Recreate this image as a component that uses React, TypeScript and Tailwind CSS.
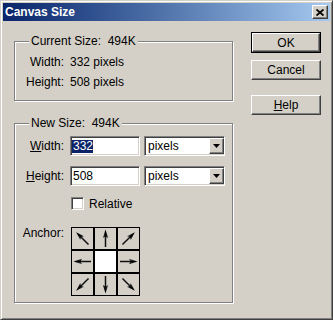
import React from "react";

const raised =
  "border border-t-white border-l-white border-b-[#404040] border-r-[#404040] shadow-[inset_-1px_-1px_0_#808080,inset_1px_1px_0_#d4d0c8]";
const sunken =
  "border border-t-[#808080] border-l-[#808080] border-b-white border-r-white shadow-[inset_1px_1px_0_#404040,inset_-1px_-1px_0_#d4d0c8]";
const etched =
  "border border-[#808080] shadow-[inset_1px_1px_0_#fff,1px_1px_0_#fff]";

function Arrow({ angle }: { angle: number }) {
  return (
    <svg width="21" height="21" viewBox="0 0 21 21">
      <defs>
        <linearGradient id={`g${angle}`} x1="0" y1="0" x2="1" y2="0">
          <stop offset="0" stopColor="#555" />
          <stop offset="0.5" stopColor="#000" />
          <stop offset="1" stopColor="#333" />
        </linearGradient>
      </defs>
      <g transform={`rotate(${angle} 10.5 10.5)`}>
        <line x1="10.5" y1="8" x2="10.5" y2="19" stroke="#111" strokeWidth="1.5" />
        <polygon points="10.5,1.5 13.2,10 10.5,8.5 7.8,10" fill={`url(#g${angle})`} />
      </g>
    </svg>
  );
}

function DownTri() {
  return (
    <svg width="7" height="4" viewBox="0 0 7 4">
      <polygon points="0,0 7,0 3.5,4" fill="#000" />
    </svg>
  );
}

function Select() {
  return (
    <div className={`${sunken} bg-white w-[81px] h-[20px] flex items-center p-[1px]`}>
      <span className="flex-1 pl-[2px] leading-[14px]">pixels</span>
      <div className={`${raised} bg-[#d4d0c8] w-[15px] h-[16px] flex items-center justify-center -mr-[1px]`}>
        <DownTri />
      </div>
    </div>
  );
}

export default function App() {
  return (
    <div
      className="w-[333px] h-[320px] bg-[#d4d0c8] border border-t-[#d4d0c8] border-l-[#d4d0c8] border-b-[#404040] border-r-[#404040] shadow-[inset_1px_1px_0_#fff,inset_-1px_-1px_0_#808080] p-[2px] text-[12px] text-black flex flex-col"
      style={{ fontFamily: '"Liberation Sans", Arial, sans-serif' }}
    >
      {/* Title bar */}
      <div className="h-[18px] bg-linear-to-r from-[#0a246a] to-[#a6caf0] flex items-center justify-between pl-[2px] pr-[2px]">
        <span className="text-white font-bold text-[12px] leading-[14px]">Canvas Size</span>
        <div className={`${raised} bg-[#d4d0c8] w-[16px] h-[14px] flex items-center justify-center`}>
          <svg width="8" height="7" viewBox="0 0 8 7">
            <path d="M0.5 0.5 L7.5 6.5 M7.5 0.5 L0.5 6.5" stroke="#000" strokeWidth="1.8" />
          </svg>
        </div>
      </div>

      <div className="flex pl-[11px]">
        {/* Left column */}
        <div className="w-[220px] flex flex-col">
          {/* Current size group */}
          <div className={`${etched} relative mt-[20px] w-[219px] h-[60px] pt-[10px]`}>
            <span className="absolute left-[14px] -top-[8px] px-[2px] bg-[#d4d0c8] leading-[14px] whitespace-pre">
              Current Size:  494K
            </span>
            <div className="grid grid-cols-[49px_auto] gap-x-[6px] auto-rows-[20px] items-center leading-[14px]">
              <span className="text-right">Width:</span>
              <span>332 pixels</span>
              <span className="text-right">Height:</span>
              <span>508 pixels</span>
            </div>
          </div>

          {/* New size group */}
          <div className={`${etched} relative mt-[22px] w-[219px] h-[180px] pt-[12px]`}>
            <span className="absolute left-[14px] -top-[8px] px-[2px] bg-[#d4d0c8] leading-[14px] whitespace-pre">
              New Size:  494K
            </span>
            <div className="grid grid-cols-[49px_auto] gap-x-[6px] gap-y-[10px] leading-[14px]">
              <span className="text-right self-center">
                <u>W</u>idth:
              </span>
              <div className="flex gap-[4px]">
                <div className={`${sunken} bg-white w-[70px] h-[20px] flex items-center p-[1px]`}>
                  <span className="bg-[#0a246a] text-white leading-[13px] pl-[1px]">332</span>
                </div>
                <Select />
              </div>
              <span className="text-right self-center">
                <u>H</u>eight:
              </span>
              <div className="flex gap-[4px]">
                <div className={`${sunken} bg-white w-[70px] h-[20px] flex items-center p-[1px]`}>
                  <span className="leading-[13px] pl-[1px]">508</span>
                </div>
                <Select />
              </div>
            </div>
            <div className="grid grid-cols-[49px_auto] gap-x-[6px] mt-[11px] leading-[14px]">
              <span />
              <div className="flex items-center gap-[5px] ml-[1px] h-[13px]">
                <div className={`${sunken} bg-white w-[13px] h-[13px]`} />
                <span>Relative</span>
              </div>
            </div>
            <div className="grid grid-cols-[49px_auto] gap-x-[6px] mt-[17px] leading-[14px]">
              <span className="text-right -mt-[1px]">Anchor:</span>
              <div className="ml-[1px] w-[69px] h-[69px] bg-black p-[1px] grid grid-cols-3 gap-[2px]">
                <div className="bg-[#d4d0c8]"><Arrow angle={-45} /></div>
                <div className="bg-[#d4d0c8]"><Arrow angle={0} /></div>
                <div className="bg-[#d4d0c8]"><Arrow angle={45} /></div>
                <div className="bg-[#d4d0c8]"><Arrow angle={-90} /></div>
                <div className="bg-white" />
                <div className="bg-[#d4d0c8]"><Arrow angle={90} /></div>
                <div className="bg-[#d4d0c8]"><Arrow angle={-135} /></div>
                <div className="bg-[#d4d0c8]"><Arrow angle={180} /></div>
                <div className="bg-[#d4d0c8]"><Arrow angle={135} /></div>
              </div>
            </div>
          </div>
        </div>

        {/* Right column: buttons */}
        <div className="ml-[17px] pt-[11px] flex flex-col w-[70px]">
          <div className="border border-black">
            <div className={`${raised} bg-[#d4d0c8] h-[19px] flex items-center justify-center leading-[14px]`}>
              OK
            </div>
          </div>
          <div className={`${raised} mt-[7px] bg-[#d4d0c8] h-[20px] flex items-center justify-center leading-[14px]`}>
            Cancel
          </div>
          <div className={`${raised} mt-[15px] bg-[#d4d0c8] h-[20px] flex items-center justify-center leading-[14px]`}>
            <span>
              <u>H</u>elp
            </span>
          </div>
        </div>
      </div>
    </div>
  );
}
